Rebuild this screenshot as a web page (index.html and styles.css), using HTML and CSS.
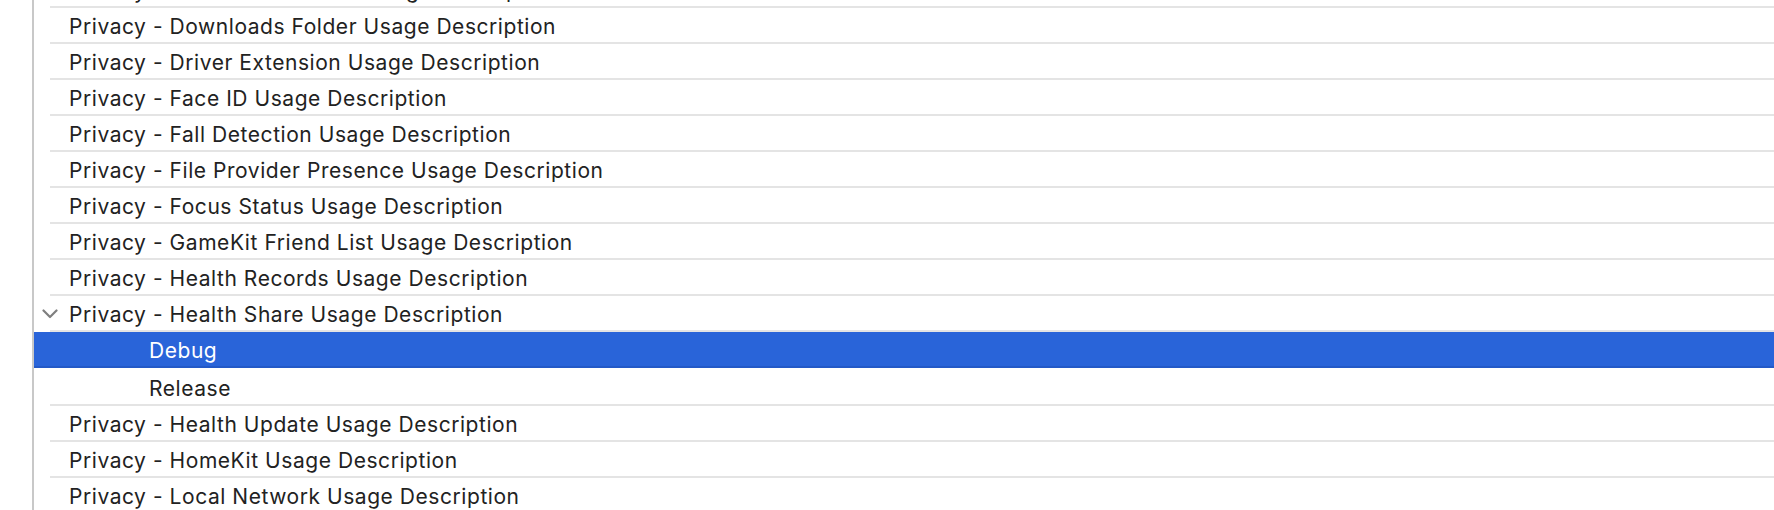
FILE: index.html
```html
<!DOCTYPE html>
<html>
<head>
<meta charset="utf-8">
<link rel="stylesheet" href="styles.css">
</head>
<body>
<div class="outline">
  <div class="gutter"></div>
  <div class="vline"></div>
  <div class="viewport">
    <div class="list">
      <div class="row"><span class="label">Privacy - Documents Folder Usage Description</span></div>
      <div class="row"><span class="label">Privacy - Downloads Folder Usage Description</span></div>
      <div class="row"><span class="label">Privacy - Driver Extension Usage Description</span></div>
      <div class="row"><span class="label">Privacy - Face ID Usage Description</span></div>
      <div class="row"><span class="label">Privacy - Fall Detection Usage Description</span></div>
      <div class="row"><span class="label">Privacy - File Provider Presence Usage Description</span></div>
      <div class="row"><span class="label">Privacy - Focus Status Usage Description</span></div>
      <div class="row"><span class="label">Privacy - GameKit Friend List Usage Description</span></div>
      <div class="row"><span class="label">Privacy - Health Records Usage Description</span></div>
      <div class="row expanded">
        <svg class="chevron" width="16" height="10" viewBox="0 0 16 10"><polyline points="1.5,1.5 8,8 14.5,1.5" fill="none" stroke="#7f7f7f" stroke-width="2.2" stroke-linecap="round" stroke-linejoin="round"/></svg>
        <span class="label">Privacy - Health Share Usage Description</span>
      </div>
      <div class="row child selected"><span class="label">Debug</span></div>
      <div class="row child after-selected"><span class="label">Release</span></div>
      <div class="row"><span class="label">Privacy - Health Update Usage Description</span></div>
      <div class="row"><span class="label">Privacy - HomeKit Usage Description</span></div>
      <div class="row"><span class="label">Privacy - Local Network Usage Description</span></div>
    </div>
  </div>
</div>
</body>
</html>
```
FILE: styles.css
```css
html, body {
  margin: 0;
  padding: 0;
  background: #ffffff;
}
body {
  width: 1774px;
  height: 510px;
  overflow: hidden;
  font-family: "Inter", "Liberation Sans", sans-serif;
  font-size: 21px;
  letter-spacing: 0.55px;
  color: #222222;
}
.outline {
  display: flex;
  height: 510px;
}
.gutter {
  width: 32px;
  flex: none;
}
.vline {
  width: 2px;
  flex: none;
  background: #c8c8c8;
}
.viewport {
  flex: 1;
  overflow: hidden;
}
.list {
  margin-top: -30px;
  display: flex;
  flex-direction: column;
}
.row {
  height: 34px;
  padding-top: 2px;
  display: flex;
  align-items: center;
  background: linear-gradient(#e4e4e4, #e4e4e4) 16px 0 / calc(100% - 16px) 2px no-repeat;
}
.label {
  display: block;
  margin-left: 35px;
  line-height: 34px;
  height: 32px;
  padding-top: 2px;
  white-space: nowrap;
}
.expanded .chevron {
  margin-left: 8px;
  margin-top: 2px;
  flex: none;
}
.expanded .label {
  margin-left: 11px;
}
.child .label {
  margin-left: 115px;
}
.selected {
  border-bottom: 2px solid #2359c7;
  background:
    linear-gradient(#e4e4e4, #e4e4e4) 16px 0 / calc(100% - 16px) 2px no-repeat,
    linear-gradient(#ffffff, #ffffff) 0 0 / 16px 2px no-repeat,
    #2964d9;
}
.selected .label {
  color: #ffffff;
}
.after-selected {
  background: none;
}
```
